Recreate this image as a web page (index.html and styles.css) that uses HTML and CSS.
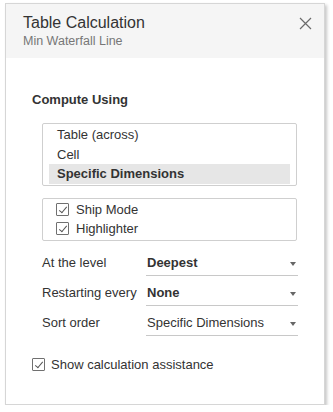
FILE: index.html
```html
<!DOCTYPE html>
<html lang="en">
<head>
    <meta charset="UTF-8">
    <title>Table Calculation</title>
    <link rel="stylesheet" href="styles.css">
</head>
<body>
    <div class="dialog">
        <!-- Header -->
        <div class="dialog-header">
            <div class="titles">
                <div class="title">Table Calculation</div>
                <div class="subtitle">Min Waterfall Line</div>
            </div>
            <button class="close-btn" aria-label="Close">
                <svg width="13" height="13" viewBox="0 0 13 13">
                    <path d="M1 1 L12 12 M12 1 L1 12" stroke="#6b6b6b" stroke-width="1.2" fill="none"/>
                </svg>
            </button>
        </div>

        <!-- Body -->
        <div class="dialog-body">
            <h3 class="section-title">Compute Using</h3>

            <ul class="option-list">
                <li>Table (across)</li>
                <li>Cell</li>
                <li class="selected">Specific Dimensions</li>
            </ul>

            <ul class="dim-list">
                <li><span class="check"></span>Ship Mode</li>
                <li><span class="check"></span>Highlighter</li>
            </ul>

            <div class="field">
                <span class="field-label">At the level</span>
                <div class="dropdown strong">Deepest<span class="caret"></span></div>
            </div>
            <div class="field">
                <span class="field-label">Restarting every</span>
                <div class="dropdown strong">None<span class="caret"></span></div>
            </div>
            <div class="field">
                <span class="field-label">Sort order</span>
                <div class="dropdown">Specific Dimensions<span class="caret"></span></div>
            </div>

            <label class="assist">
                <span class="check"></span>Show calculation assistance
            </label>
        </div>
    </div>
</body>
</html>
```

FILE: styles.css
```css
/* General */
body {
    margin: 0;
    padding: 0;
    background: #fff;
    font-family: "Liberation Sans", Arial, sans-serif;
    color: #333;
}

/* Dialog box */
.dialog {
    margin: 3px 0 0 5px;
    width: 320px;
    height: 402px;
    box-sizing: border-box;
    border: 1px solid #d6d6d6;
    background: #fff;
    box-shadow: 2px 2px 3px rgba(0, 0, 0, 0.22);
}

.dialog-header {
    display: flex;
    justify-content: space-between;
    align-items: flex-start;
    background: #f5f5f5;
    height: 54px;
    box-sizing: border-box;
    padding: 9px 12px 0 17px;
}

.title {
    font-size: 16px;
    color: #333;
    line-height: 20px;
}

.subtitle {
    font-size: 12.5px;
    color: #777;
    line-height: 16px;
}

.close-btn {
    background: none;
    border: none;
    padding: 0;
    margin-top: 4px;
    cursor: pointer;
}

.dialog-body {
    padding: 34px 26px 0 26px;
}

.section-title {
    font-size: 13px;
    font-weight: bold;
    margin: 0 0 15px 0;
    color: #333;
    line-height: 16px;
}

/* Compute using list */
.option-list,
.dim-list {
    list-style: none;
    margin: 0 0 0 10px;
    padding: 0 6px;
    width: 255px;
    box-sizing: border-box;
    border: 1px solid #cfcfcf;
    border-radius: 2px;
    font-size: 13px;
}

.option-list {
    padding-top: 1px;
    padding-bottom: 1px;
}

.option-list li {
    height: 19.5px;
    line-height: 19.5px;
    padding-left: 8px;
}

.option-list li.selected {
    background: #e6e6e6;
    font-weight: bold;
}

.dim-list {
    margin-top: 12px;
    padding: 1px 13px 1px;
}

.dim-list li {
    display: flex;
    align-items: center;
    height: 19.5px;
}

/* Checkbox */
.check {
    display: inline-block;
    width: 13px;
    height: 13px;
    box-sizing: border-box;
    border: 1px solid #707070;
    border-radius: 1px;
    margin-right: 7px;
    position: relative;
}

.check::after {
    content: "";
    position: absolute;
    left: 4px;
    top: 1px;
    width: 3px;
    height: 7px;
    border: solid #555;
    border-width: 0 1px 1px 0;
    transform: rotate(40deg);
}

/* Fields */
.field {
    display: flex;
    align-items: flex-start;
    margin-left: 10px;
    height: 30px;
    font-size: 13px;
    line-height: 24px;
}

.dim-list + .field {
    margin-top: 10px;
}

.field-label {
    width: 104px;
}

.dropdown {
    flex: 0 0 152px;
    height: 25px;
    box-sizing: border-box;
    border-bottom: 1px solid #c8c8c8;
    position: relative;
    padding-left: 1px;
}

.dropdown.strong {
    font-weight: bold;
}

.caret {
    position: absolute;
    right: 2px;
    top: 11px;
    border-left: 3.5px solid transparent;
    border-right: 3.5px solid transparent;
    border-top: 4px solid #666;
}

/* Assistance checkbox */
.assist {
    display: flex;
    align-items: center;
    margin-top: 16px;
    font-size: 13px;
}

.assist .check {
    margin-right: 6px;
}
```
